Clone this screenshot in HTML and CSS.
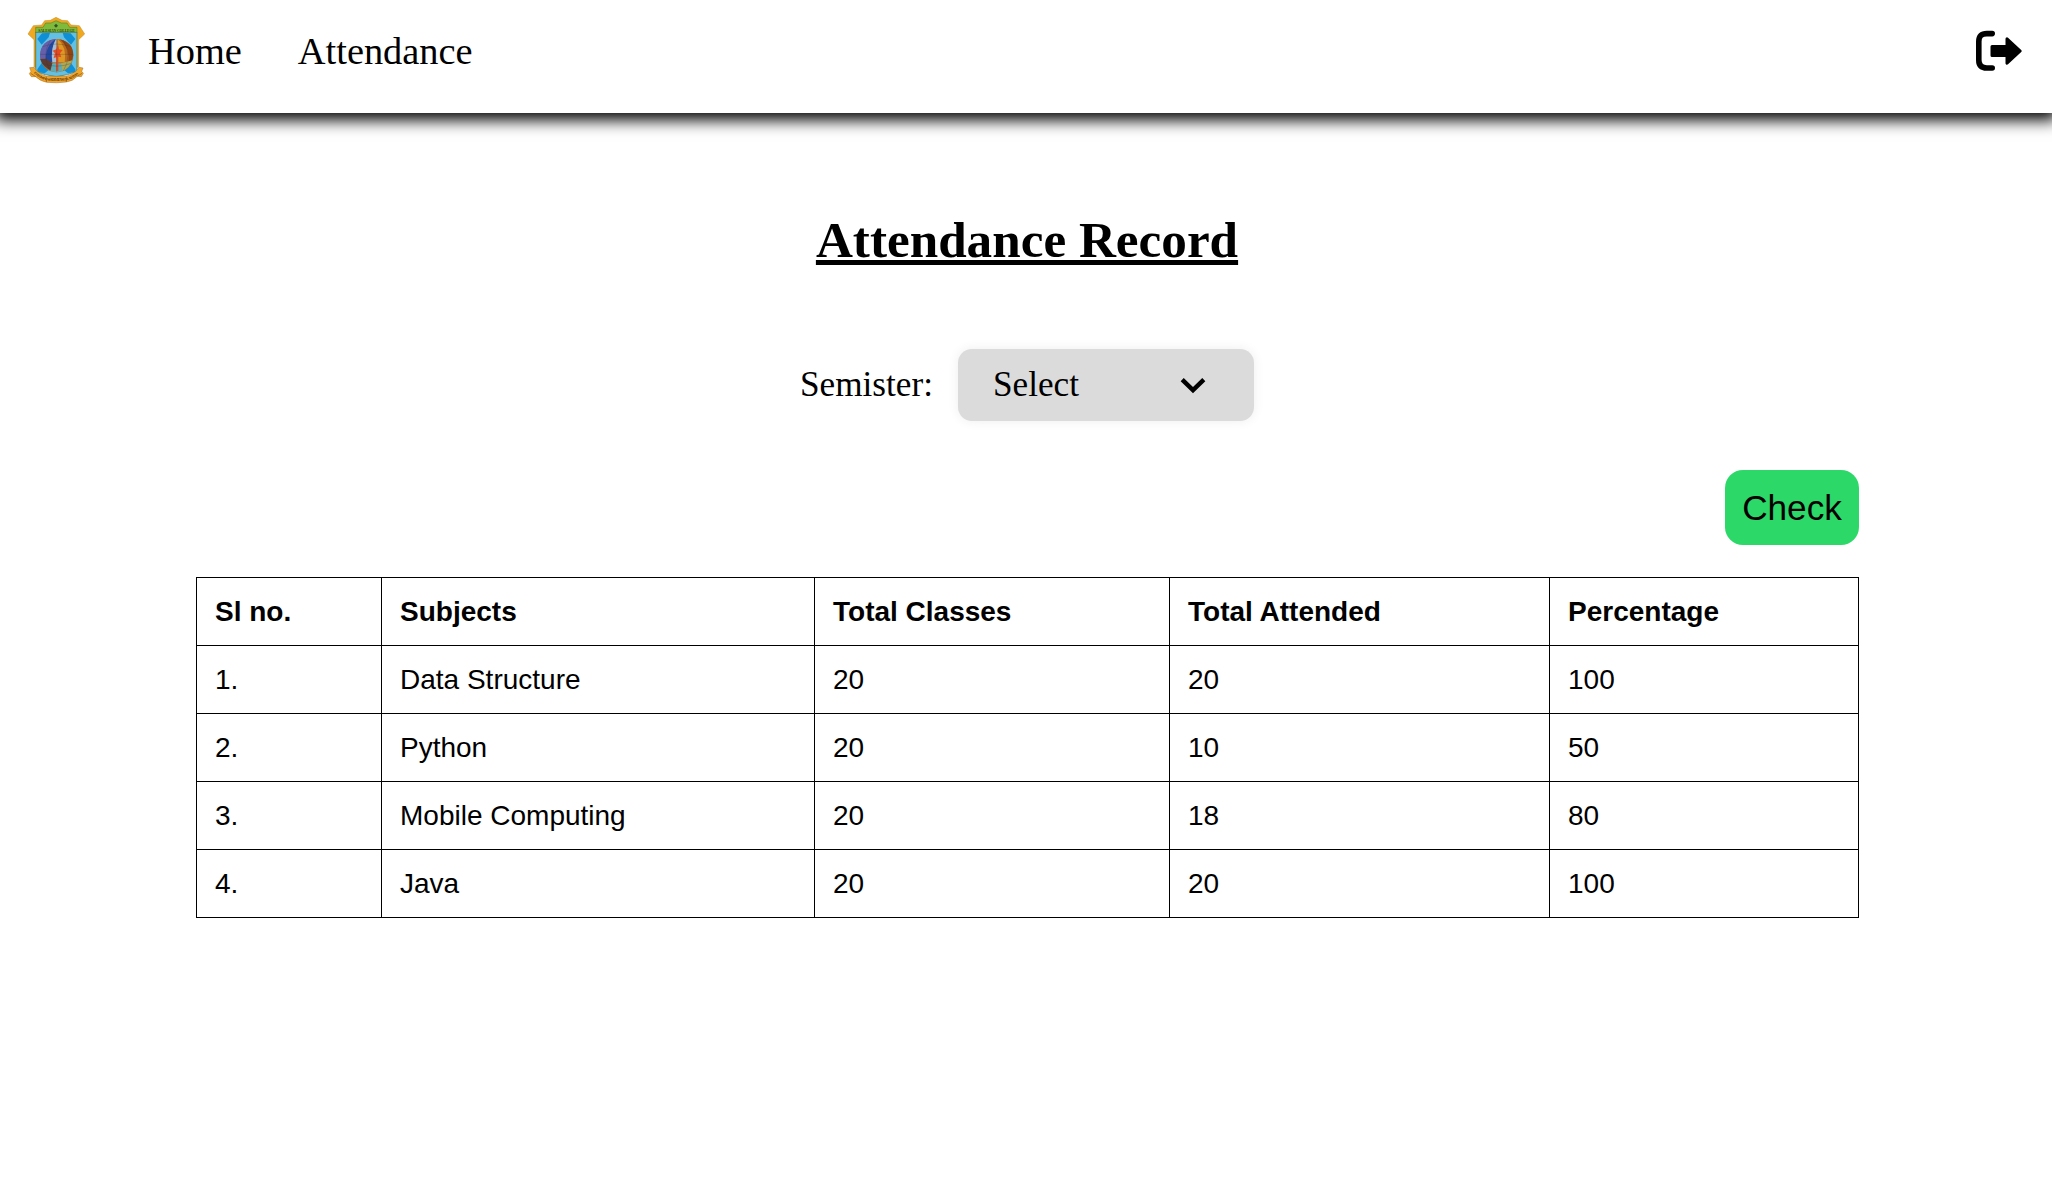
FILE: index.html
```html
<!DOCTYPE html>
<html lang="en">
<head>
<meta charset="utf-8">
<title>Attendance Record</title>
<link rel="stylesheet" href="styles.css">
</head>
<body>
<header class="navbar">
  <a class="logo" href="#" aria-label="Home page">
    <svg viewBox="48 18 252 270" width="84" height="90">
      <path fill="#f0a81e" stroke="#c08a2a" stroke-width="1.5" d="M168 52 L186 61 L203 62 L213 75 L238 77 L254 102 L236 119 L236 202 L102 202 L102 119 L84 102 L100 77 L125 75 L134 62 L151 61 Z"/>
      <path fill="#62c0e4" stroke="#55652f" stroke-width="2" d="M107 96 H231 V214 Q205 226 169 230 Q133 226 107 214 Z"/>
      <path fill="#0f8fd6" d="M112 117 L126 100 L150 98 L146 112 L125 134 Z M226 117 L212 100 L188 98 L192 112 L213 134 Z M112 208 L125 189 L146 210 L134 220 L112 216 Z M226 208 L213 189 L192 210 L204 220 L226 216 Z"/>
      <path fill="#7fbb3a" stroke="#4f702a" stroke-width="1.5" d="M107 97 V82 H129 L137 69 H153 L168 62 L184 69 H201 L209 82 H231 V97 Z"/>
      <circle cx="170" cy="167" r="50" fill="#bb6a1c"/>
      <path fill="#665fac" d="M168 117 Q121 121 120 167 Q120 180 127 190 L168 186 Z"/>
      <path fill="#2149a1" d="M168 117 Q135 137 137 185 L157 186 Q153 140 168 117 Z"/>
      <path fill="#a7bfd0" d="M168 117 Q151 145 157 187 L170 187 V117 Z"/>
      <path fill="#dc9a24" d="M173 117 Q201 140 194 187 L173 187 Z"/>
      <path fill="#93440f" d="M180 118 Q220 127 220 166 L215 184 L205 186 Q211 146 180 118 Z"/>
      <path fill="#5c3b32" d="M121 177 L139 176 L158 190 L157 213 Q128 202 121 177 Z"/>
      <path fill="#aaa955" d="M183 190 L217 181 Q209 207 183 215 Z"/>
      <path fill="#5cabb5" d="M157 190 L183 190 L188 214 Q170 219 151 214 Z"/>
      <path fill="#e84a1f" d="M174 132 L177 148 L188 150 L180 160 L184 172 L175 170 V213 H169 V172 L161 174 L165 160 L158 152 L169 148 Z"/>
      <path fill="none" stroke="#30343c" stroke-width="1.3" opacity=".6" d="M121 163 H219 M128 140 Q170 124 212 140 M126 190 Q170 207 214 190 M170 117 V217 M151 121 Q123 166 151 213 M190 121 Q218 166 190 213"/>
      <path fill="#efa628" stroke="#a56a20" stroke-width="1.5" d="M89 203 L101 202 L110 212 Q125 226 140 229 L198 229 Q215 226 229 212 L237 202 L249 204 L245 214 L250 220 L244 230 L232 229 Q218 244 199 246 Q170 250 140 247 Q120 243 107 230 L94 230 L88 221 L93 214 Z"/>
      <path fill="none" stroke="#8e531e" stroke-width="2" d="M139 230 V246 M199 230 V246 M92 220 L107 230 M246 220 L232 229"/>
      <path fill="#35502b" d="M168 71 L174 77 L168 83 L162 77 Z"/>
      <text class="logo-name" x="115" y="95" textLength="109">SALESIAN COLLEGE</text>
      <path id="motto" fill="none" d="M101 219 Q125 241 149 242 H190 Q220 239 242 216"/>
      <text class="logo-motto"><textPath href="#motto" textLength="146">ET DOMINUM SERVIENS ET LAETITIA</textPath></text>
    </svg>
  </a>
  <nav class="links">
    <a href="#">Home</a>
    <a href="#">Attendance</a>
  </nav>
  <a class="logout" href="#" aria-label="Log out">
    <svg viewBox="0 0 48 42" width="48" height="42">
      <path fill="none" stroke="#000" stroke-width="5.6" stroke-linecap="round" stroke-linejoin="round" d="M17.2 3.6 H11.8 Q3.8 3.6 3.8 11.6 V30 Q3.8 38 11.8 38 H17.2"/>
      <path stroke="#000" stroke-width="3" stroke-linejoin="round" d="M17 16.5 H32 V8.8 L45.2 21 L32 33.2 V25.5 H17 Z"/>
    </svg>
  </a>
</header>
<main class="page">
  <h1 class="title">Attendance Record</h1>
  <div class="filter">
    <span>Semister:</span>
    <button class="select" type="button">
      <span>Select</span>
      <svg viewBox="0 0 26 18" width="26" height="18"><path fill="none" stroke="#000" stroke-width="4.4" d="M2.2 3.7 L13 14.2 L23.8 3.7"/></svg>
    </button>
  </div>
  <section class="record">
    <button class="check" type="button">Check</button>
    <table class="table">
      <colgroup><col class="c-no"><col class="c-subject"><col class="c-total"><col class="c-attended"><col></colgroup>
      <thead>
        <tr><th>Sl no.</th><th>Subjects</th><th>Total Classes</th><th>Total Attended</th><th>Percentage</th></tr>
      </thead>
      <tbody>
        <tr><td>1.</td><td>Data Structure</td><td>20</td><td>20</td><td>100</td></tr>
        <tr><td>2.</td><td>Python</td><td>20</td><td>10</td><td>50</td></tr>
        <tr><td>3.</td><td>Mobile Computing</td><td>20</td><td>18</td><td>80</td></tr>
        <tr><td>4.</td><td>Java</td><td>20</td><td>20</td><td>100</td></tr>
      </tbody>
    </table>
  </section>
</main>
</body>
</html>
```
FILE: styles.css
```css
* {
  box-sizing: border-box;
}

body {
  margin: 0;
  background: #fff;
  color: #000;
  font-family: "Liberation Serif", "Times New Roman", serif;
}

.navbar {
  display: flex;
  align-items: flex-start;
  height: 113px;
  padding: 6px 29px 0 16px;
  background: #fff;
  box-shadow: 0 2px 15px 5px #000;
}

.logo svg,
.logout svg {
  display: block;
}

.logo-name {
  font: bold 11px "Liberation Serif", serif;
  fill: #2c3f14;
}

.logo-motto {
  font: bold 10px "Liberation Serif", serif;
  fill: #5c2f0e;
}

.links {
  display: flex;
  flex: 1;
  gap: 56px;
  padding: 23px 0 0 48px;
  font-size: 38.4px;
  line-height: 44px;
}

.links a {
  color: inherit;
  text-decoration: none;
}

.logout {
  padding-top: 24px;
}

.page {
  display: flex;
  flex-direction: column;
  align-items: center;
  padding-top: 98px;
}

.title {
  margin: 0 0 0 2px;
  font-size: 51.2px;
  line-height: 58px;
  text-decoration: underline;
}

.filter {
  display: flex;
  align-items: center;
  gap: 25px;
  margin-top: 80px;
  margin-left: 2px;
  font-size: 35.2px;
}

.select {
  display: flex;
  align-items: center;
  justify-content: space-between;
  width: 296px;
  height: 72px;
  padding: 0 48px 0 35px;
  border: 0;
  border-radius: 14px;
  background: #dbdbdb;
  box-shadow: 0 0 12px rgba(0, 0, 0, 0.07);
  color: inherit;
  font: inherit;
}

.record {
  display: flex;
  flex-direction: column;
  align-items: flex-end;
  width: 1663px;
  margin: 49px 0 0 3px;
  font-family: "Liberation Sans", Arial, sans-serif;
}

.check {
  width: 134px;
  height: 75px;
  padding: 0;
  border: 0;
  border-radius: 18px;
  background: #2bd868;
  color: inherit;
  font: 35.2px "Liberation Sans", Arial, sans-serif;
}

.table {
  width: 100%;
  margin-top: 32px;
  border-collapse: collapse;
  table-layout: fixed;
  font-size: 28px;
}

.table tr {
  height: 68px;
}

.table th,
.table td {
  padding: 0 18px;
  border: 1px solid #000;
  text-align: left;
}

.c-no {
  width: 185px;
}

.c-subject {
  width: 433px;
}

.c-total {
  width: 355px;
}

.c-attended {
  width: 380px;
}
```
